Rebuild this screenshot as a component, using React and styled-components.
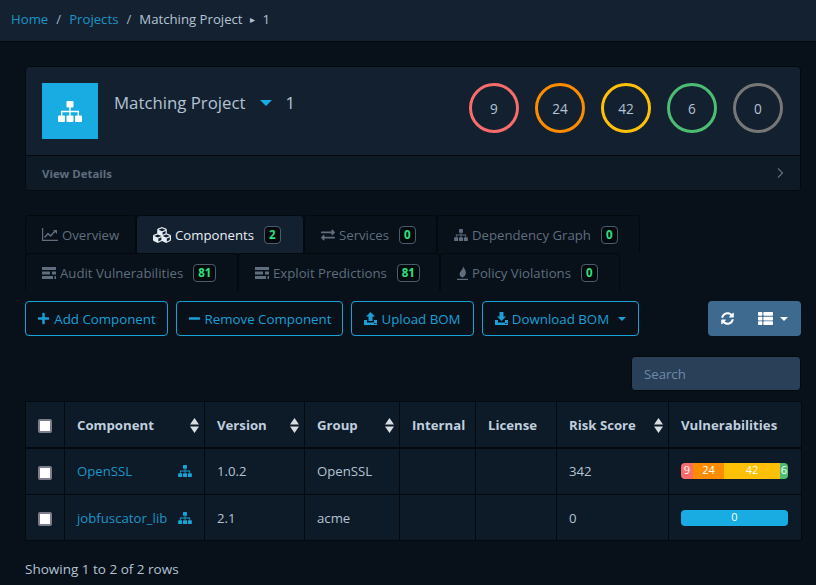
import React from "react";
import styled, { createGlobalStyle } from "styled-components";
import { FaCubes, FaExchangeAlt, FaPlus, FaMinus, FaSyncAlt, FaThList } from "react-icons/fa";

const Global = createGlobalStyle`
  html, body { margin: 0; padding: 0; height: 585px; overflow: hidden; background: #08111a; }
  body { font-family: "Open Sans", "Noto Sans", sans-serif; font-size: 13.2px; color: #b4c3d4; }
  * { box-sizing: border-box; }
`;

const Page = styled.div`
  width: 816px;
  height: 585px;
  background: #08111a;
  overflow: hidden;
`;
const Crumbs = styled.nav`
  height: 42px;
  background: #142130;
  border-bottom: 1px solid #04090e;
  padding: 0 11px 4px;
  display: flex;
  align-items: center;
  color: #b4c3d4;
`;
const Crumb = styled.span`
  color: ${(p) => (p.$link ? "#1b95c6" : "#b4c3d4")};
`;
const Sep = styled.span`
  margin: 0 8px;
  color: #a3b2c2;
`;
const Tiny = styled.span`
  font-size: 10px;
  margin: 0 8px 0 7px;
`;
const Main = styled.main`
  padding: 24px 15px 0 25px;
`;
const Card = styled.section`
  background: #132030;
  border: 1px solid #04090e;
  border-radius: 4px;
  overflow: hidden;
`;
const CardBody = styled.div`
  height: 88px;
  padding: 16px;
  display: flex;
  justify-content: space-between;
`;
const Brand = styled.div`
  display: flex;
  align-items: flex-start;
`;
const Logo = styled.div`
  width: 56px;
  height: 56px;
  background: #18ace3;
  color: #fff;
  display: flex;
  align-items: center;
  justify-content: center;
`;
const Title = styled.div`
  margin-left: 16px;
  font-size: 16.8px;
  line-height: 40px;
  color: #b4c3d4;
  display: flex;
  align-items: center;
`;
const Caret = styled.span`
  width: 0;
  height: 0;
  border-left: 6px solid transparent;
  border-right: 6px solid transparent;
  border-top: 6px solid #18ace3;
  margin: 0 13px 0 15px;
`;
const Circles = styled.div`
  display: flex;
  gap: 16px;
  padding-right: 1px;
`;
const Circle = styled.div`
  width: 50px;
  height: 50px;
  border: 3px solid ${(p) => p.$c};
  border-radius: 50%;
  display: flex;
  align-items: center;
  justify-content: center;
  font-size: 13.6px;
  color: #b4c3d4;
`;
const CardFooter = styled.div`
  height: 35px;
  background: #0f1a27;
  border-top: 1px solid #04090e;
  padding: 0 16px;
  display: flex;
  align-items: center;
  justify-content: space-between;
  color: #5f6e7e;
  font-size: 11.4px;
  font-weight: 700;
`;
const Tabs = styled.div`
  margin-top: 24px;
  width: 640px;
`;
const TabRow = styled.div`
  display: flex;
  height: 38px;
`;
const Tab = styled.div`
  width: ${(p) => p.$w}px;
  display: flex;
  align-items: center;
  padding: 1px 0 0 16px;
  color: ${(p) => (p.$active ? "#e8eef4" : "#5f6e7e")};
  background: ${(p) => (p.$active ? "#132030" : "transparent")};
  border: 1px solid #04090e;
  border-bottom: ${(p) => (p.$active ? "0" : "1px solid transparent")};
  border-radius: 4px 4px 0 0;
  white-space: nowrap;
  svg { margin-right: 4px; flex: none; }
`;
const Badge = styled.span`
  margin-left: 10px;
  height: 18px;
  min-width: 16px;
  border: 1px solid #4d5c6c;
  border-radius: 4px;
  background: #030a0e;
  color: #2ee07f;
  font-size: 11.5px;
  font-weight: 700;
  line-height: 16px;
  text-align: center;
  padding: 0 4px;
`;
const Toolbar = styled.div`
  margin-top: 10px;
  display: flex;
  align-items: center;
`;
const OutlineBtn = styled.button`
  height: 35px;
  width: ${(p) => p.$w}px;
  margin-right: 8px;
  background: transparent;
  border: 1px solid #18a3d8;
  border-radius: 4px;
  color: #1b9fd4;
  font: inherit;
  font-size: 13.3px;
  display: flex;
  align-items: center;
  justify-content: center;
  gap: 4px;
  padding: 0;
  white-space: nowrap;
  svg { flex: none; }
`;
const MiniCaret = styled.span`
  width: 0;
  height: 0;
  border-left: 4px solid transparent;
  border-right: 4px solid transparent;
  border-top: 4px solid ${(p) => p.$c || "#1b9fd4"};
  margin-left: ${(p) => p.$ml || 5}px;
`;
const Solid = styled.div`
  margin-left: auto;
  width: 93px;
  height: 35px;
  background: #3f6a90;
  border-radius: 4px;
  color: #fff;
  display: flex;
  align-items: center;
  padding-left: 13px;
  svg { flex: none; }
`;
const ListGlyph = styled(FaThList)`
  margin-left: 24px;
`;
const SearchRow = styled.div`
  margin-top: 20px;
  display: flex;
  justify-content: flex-end;
`;
const Search = styled.div`
  width: 170px;
  height: 35px;
  background: #2a4059;
  border: 1px solid #04090e;
  border-radius: 4px;
  display: flex;
  align-items: center;
  padding-left: 12px;
  color: #6d8aa8;
`;
const Table = styled.table`
  margin-top: 10px;
  width: 776px;
  table-layout: fixed;
  border-collapse: collapse;
  background: #0d1a27;
`;
const Th = styled.th`
  height: 46px;
  border: 1px solid #04090e;
  border-bottom-width: 2px;
  padding: 1px 12px 0;
  font-size: 13.2px;
  font-weight: 700;
  color: #c0cfdf;
  text-align: left;
  position: relative;
  white-space: nowrap;
`;
const Td = styled.td`
  height: ${(p) => p.$h || 46}px;
  border: 1px solid #04090e;
  padding: 0 12px;
  color: #b4c3d4;
`;
const CheckCell = styled(Td)`
  padding: 0;
  text-align: center;
`;
const CheckHead = styled(Th)`
  padding: 0;
  text-align: center;
`;
const Check = styled.span`
  display: inline-block;
  width: 14px;
  height: 14px;
  background: #fff;
  border: 2px solid #7c7c8c;
  border-radius: 2px;
  vertical-align: middle;
`;
const Sort = styled.svg`
  position: absolute;
  right: 5px;
  top: 16px;
  width: 9px;
  height: 15px;
`;
const NameCell = styled.div`
  display: flex;
  justify-content: space-between;
  align-items: center;
  color: #1b95c6;
  svg { color: #18a3d8; }
`;
const Bar = styled.div`
  display: flex;
  width: 107px;
  height: 16px;
  border-radius: 4px;
  overflow: hidden;
  font-size: 11px;
  line-height: 14px;
  color: #fff;
  text-align: center;
`;
const Seg = styled.div`
  width: ${(p) => p.$w}px;
  flex: ${(p) => (p.$w ? "none" : "1")};
  background: ${(p) => p.$c};
`;
const Summary = styled.div`
  margin-top: 19px;
  font-size: 13.5px;
  color: #b4c3d4;
`;

const SortIcon = () => (
  <Sort viewBox="0 0 9 15">
    <path d="M4.5 0 9 6.5H0z M0 8.5h9L4.5 15z" fill="#d8dde2" />
  </Sort>
);

const SitemapIcon = ({ w = 24, h = 21 }) => (
  <svg width={w} height={h} viewBox="0 0 24 21" fill="currentColor">
    <rect x="8.5" y="0" width="7" height="6.5" rx="1" />
    <rect x="0" y="14.5" width="7" height="6.5" rx="1" />
    <rect x="8.5" y="14.5" width="7" height="6.5" rx="1" />
    <rect x="17" y="14.5" width="7" height="6.5" rx="1" />
    <path d="M11.3 6h1.4v3.8H21V15h-1.4v-3.8h-6.9V15h-1.4v-3.8H4.4V15H3V9.8h8.3z" />
  </svg>
);
const ChartIcon = () => (
  <svg width="16" height="13" viewBox="0 0 16 13" fill="currentColor">
    <path d="M0 0h1.2v11.8H16V13H0z" />
    <path d="M2.6 9.6 6 5.6l2.6 2.4 4-4.6" fill="none" stroke="currentColor" strokeWidth="1.5" />
    <path d="M11 2h4v4z" />
  </svg>
);
const TasksIcon = () => (
  <svg width="14" height="12" viewBox="0 0 14 12" fill="currentColor">
    <path d="M0 0h14v3H0z" />
    <path d="M0 4.5h8v3H0zM10 4.5h4v3h-4z" />
    <path d="M0 9h11v3H0zM12.5 9H14v3h-1.5z" />
  </svg>
);
const FlameIcon = () => (
  <svg width="11" height="14" viewBox="0 0 11 14" fill="currentColor">
    <path d="M6.2 0C6.8 3 9.4 4.2 8.8 7.4 8.4 9.6 6.8 11 5.4 11.4 3.2 11 2 9 2.8 6.8 3.6 4.8 6 3.6 6.2 0z" />
    <path d="M0 12.8h11V14H0z" />
  </svg>
);
const Tray = "M0 8h3v2.4h7V8h3v5H0zM10 11h1v1h-1zM11.6 11h.8v1h-.8z";
const UploadIcon = () => (
  <svg width="13" height="13" viewBox="0 0 13 13" fill="currentColor">
    <path d="M6.5 0 11 4.5H8.5V9h-4V4.5H2z" />
    <path fillRule="evenodd" d={Tray} />
  </svg>
);
const DownloadIcon = () => (
  <svg width="13" height="13" viewBox="0 0 13 13" fill="currentColor">
    <path d="M4.5 0h4v4.5H11L6.5 9 2 4.5h2.5z" />
    <path fillRule="evenodd" d={Tray} />
  </svg>
);
const ChevronIcon = () => (
  <svg width="7" height="10" viewBox="0 0 7 10">
    <path d="M1 .5 5.5 5 1 9.5" fill="none" stroke="currentColor" strokeWidth="1.2" />
  </svg>
);

export default function App() {
  return (
    <Page>
      <Global />
      <Crumbs>
        <Crumb $link>Home</Crumb><Sep>/</Sep><Crumb $link>Projects</Crumb><Sep>/</Sep>
        <Crumb>Matching Project</Crumb><Tiny>▸</Tiny><Crumb>1</Crumb>
      </Crumbs>
      <Main>
        <Card>
          <CardBody>
            <Brand>
              <Logo><SitemapIcon /></Logo>
              <Title>Matching Project<Caret />1</Title>
            </Brand>
            <Circles>
              <Circle $c="#f86c6b">9</Circle>
              <Circle $c="#fd8c00">24</Circle>
              <Circle $c="#ffc107">42</Circle>
              <Circle $c="#4dbd74">6</Circle>
              <Circle $c="#777777">0</Circle>
            </Circles>
          </CardBody>
          <CardFooter>View Details<ChevronIcon /></CardFooter>
        </Card>
        <Tabs>
          <TabRow>
            <Tab $w={111}><ChartIcon />Overview</Tab>
            <Tab $w={168} $active><FaCubes size={18} />Components<Badge>2</Badge></Tab>
            <Tab $w={133}><FaExchangeAlt size={14} />Services<Badge>0</Badge></Tab>
            <Tab $w={203}><SitemapIcon w={14} h={12} />Dependency Graph<Badge>0</Badge></Tab>
          </TabRow>
          <TabRow>
            <Tab $w={213}><TasksIcon />Audit Vulnerabilities<Badge>81</Badge></Tab>
            <Tab $w={202}><TasksIcon />Exploit Predictions<Badge>81</Badge></Tab>
            <Tab $w={180}><FlameIcon />Policy Violations<Badge>0</Badge></Tab>
          </TabRow>
        </Tabs>
        <Toolbar>
          <OutlineBtn $w={143}><FaPlus size={13} />Add Component</OutlineBtn>
          <OutlineBtn $w={167}><FaMinus size={13} />Remove Component</OutlineBtn>
          <OutlineBtn $w={123}><UploadIcon />Upload BOM</OutlineBtn>
          <OutlineBtn $w={157}><DownloadIcon />Download BOM<MiniCaret /></OutlineBtn>
          <Solid><FaSyncAlt size={13} /><ListGlyph size={15} /><MiniCaret $c="#fff" $ml={7} /></Solid>
        </Toolbar>
        <SearchRow><Search>Search</Search></SearchRow>
        <Table>
          <colgroup>
            <col width="39" /><col width="140" /><col width="100" /><col width="95" />
            <col width="76" /><col width="81" /><col width="112" /><col width="133" />
          </colgroup>
          <thead>
            <tr>
              <CheckHead><Check /></CheckHead>
              <Th>Component<SortIcon /></Th>
              <Th>Version<SortIcon /></Th>
              <Th>Group<SortIcon /></Th>
              <Th>Internal</Th>
              <Th>License</Th>
              <Th>Risk Score<SortIcon /></Th>
              <Th>Vulnerabilities</Th>
            </tr>
          </thead>
          <tbody>
            <tr>
              <CheckCell $h={47}><Check /></CheckCell>
              <Td><NameCell>OpenSSL<SitemapIcon w={14} h={12} /></NameCell></Td>
              <Td>1.0.2</Td><Td>OpenSSL</Td><Td /><Td />
              <Td>342</Td>
              <Td>
                <Bar>
                  <Seg $w={12} $c="#f86c6b">9</Seg>
                  <Seg $w={31} $c="#fd8c00">24</Seg>
                  <Seg $w={56} $c="#ffc107">42</Seg>
                  <Seg $w={8} $c="#4dbd74">6</Seg>
                </Bar>
              </Td>
            </tr>
            <tr>
              <CheckCell><Check /></CheckCell>
              <Td><NameCell>jobfuscator_lib<SitemapIcon w={14} h={12} /></NameCell></Td>
              <Td>2.1</Td><Td>acme</Td><Td /><Td />
              <Td>0</Td>
              <Td><Bar><Seg $c="#18ace3">0</Seg></Bar></Td>
            </tr>
          </tbody>
        </Table>
        <Summary>Showing 1 to 2 of 2 rows</Summary>
      </Main>
    </Page>
  );
}
